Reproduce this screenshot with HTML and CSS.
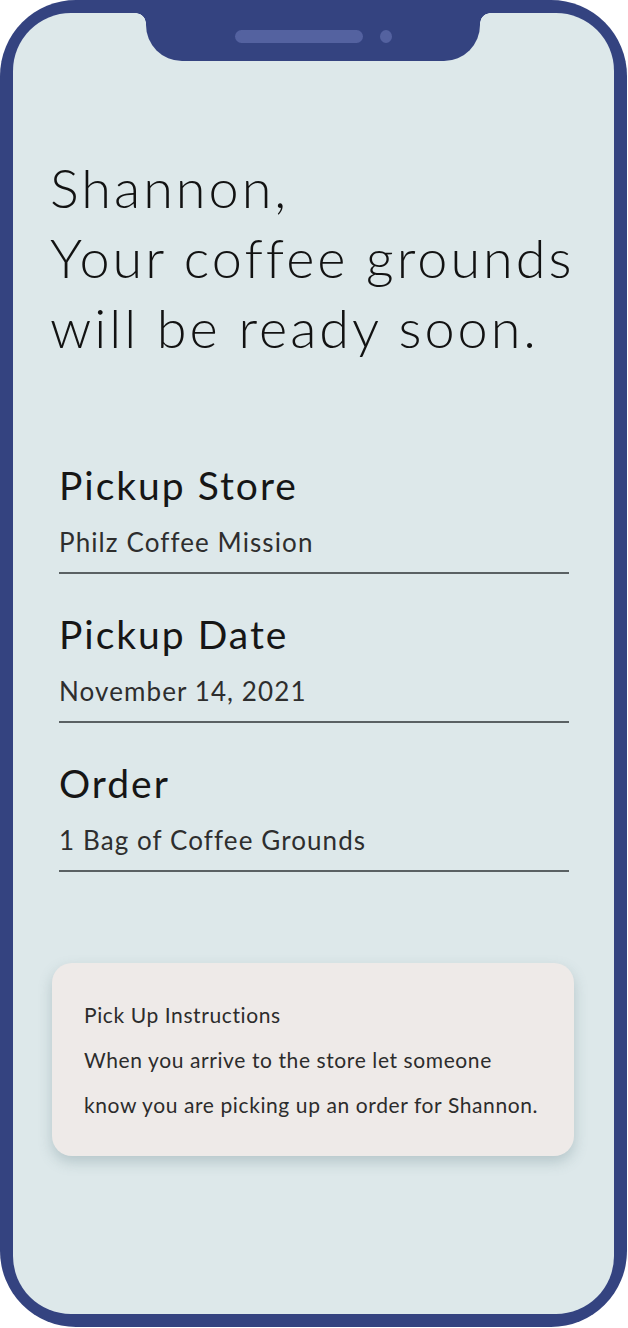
FILE: index.html
```html
<!DOCTYPE html>
<html lang="en">
<head>
<meta charset="utf-8">
<title>Order ready soon</title>
<link rel="stylesheet" href="styles.css">
</head>
<body>
<div class="phone">
  <div class="notch">
    <span class="speaker"></span>
    <span class="camera"></span>
  </div>
  <span class="fillet fillet-left"></span>
  <span class="fillet fillet-right"></span>
  <main class="screen">
    <h1 class="greeting">Shannon,<br>Your coffee grounds<br>will be ready soon.</h1>
    <section class="details">
      <div class="field">
        <h2 class="field-label">Pickup Store</h2>
        <p class="field-value">Philz Coffee Mission</p>
      </div>
      <div class="field">
        <h2 class="field-label">Pickup Date</h2>
        <p class="field-value">November 14, 2021</p>
      </div>
      <div class="field">
        <h2 class="field-label">Order</h2>
        <p class="field-value">1 Bag of Coffee Grounds</p>
      </div>
    </section>
    <div class="card">
      <p class="card-line">Pick Up Instructions</p>
      <p class="card-line">When you arrive to the store let someone</p>
      <p class="card-line">know you are picking up an order for Shannon.</p>
    </div>
  </main>
</div>
</body>
</html>
```

FILE: styles.css
```css
* { box-sizing: border-box; }

html, body {
  margin: 0;
  padding: 0;
  background: #ffffff;
}

body {
  font-family: "Lato", "Noto Sans", sans-serif;
  color: #141414;
}

.phone {
  position: relative;
  width: 627px;
  height: 1327px;
  padding: 13px 13px 13px 13px;
  background: #344380;
  border-radius: 76px;
}

.notch {
  position: absolute;
  top: 0;
  left: 146px;
  width: 334px;
  height: 61px;
  background: #344380;
  border-radius: 0 0 36px 36px;
  display: flex;
  justify-content: center;
  align-items: flex-start;
  gap: 17px;
  padding-top: 30px;
  z-index: 2;
}

.speaker {
  width: 128px;
  height: 13px;
  border-radius: 7px;
  background: #5462a0;
}

.camera {
  width: 12px;
  height: 13px;
  border-radius: 50%;
  background: #5462a0;
}

.fillet {
  position: absolute;
  top: 13px;
  width: 10px;
  height: 10px;
  z-index: 2;
}

.fillet-left {
  left: 136px;
  background: radial-gradient(circle 10px at 0 100%, transparent 9.5px, #344380 10px);
}

.fillet-right {
  left: 480px;
  background: radial-gradient(circle 10px at 100% 100%, transparent 9.5px, #344380 10px);
}

.screen {
  height: 100%;
  background: #dde8ea;
  border-radius: 58px;
  padding: 140px 0 0 37px;
  overflow: hidden;
}

.greeting {
  margin: 0;
  font-size: 54px;
  font-weight: 300;
  line-height: 70px;
  color: #121212;
  letter-spacing: 3px;
}

.details {
  width: 510px;
  margin: 97px 0 0 9px;
  display: flex;
  flex-direction: column;
  gap: 35px;
}

.field {
  border-bottom: 2px solid #5a6163;
  padding-bottom: 13px;
}

.field-label {
  margin: 0;
  font-size: 39px;
  font-weight: 400;
  line-height: 50px;
  color: #161616;
  letter-spacing: 2px;
}

.field-value {
  margin: 15px 0 0;
  font-size: 26px;
  line-height: 34px;
  color: #2e2e2e;
  letter-spacing: 1.1px;
}

.card {
  width: 522px;
  margin: 91px 0 0 2px;
  padding: 29px 20px 29px 32px;
  background: #eeeae8;
  border-radius: 20px;
  box-shadow: 0 6px 14px rgba(80, 110, 120, 0.28);
}

.card-line {
  margin: 0;
  font-size: 21px;
  line-height: 45px;
  color: #2c2c2c;
  letter-spacing: 0.6px;
  white-space: nowrap;
}
```
